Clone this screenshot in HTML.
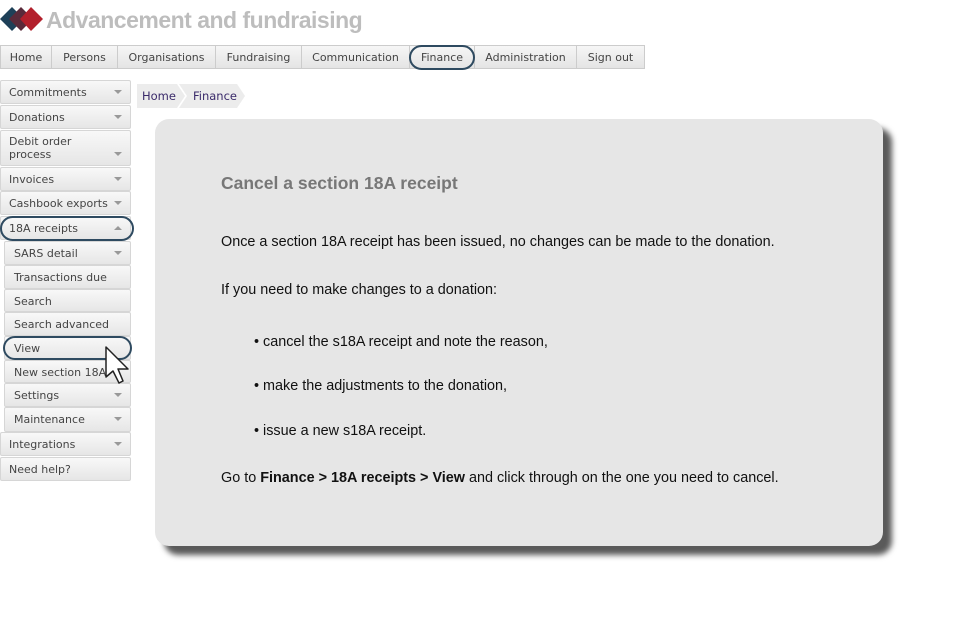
<!DOCTYPE html>
<html><head><meta charset="utf-8"><style>
*{box-sizing:border-box;margin:0;padding:0}
body{width:970px;height:640px;background:#fff;position:relative;overflow:hidden;font-family:"DejaVu Sans","Liberation Sans",sans-serif;}
.title{position:absolute;left:46px;top:7px;font:bold 23px "Liberation Sans",sans-serif;color:#bdbdbd;letter-spacing:-0.5px}
.nav{position:absolute;left:0;top:45px;height:24px;display:flex}
.nav div{height:24px;border:1px solid #ccc;border-left:none;background:linear-gradient(#f6f6f6,#e4e4e4);font-size:11px;color:#444;line-height:23px;text-align:center}
.nav div:first-child{border-left:1px solid #ccc}
.it{position:absolute;left:0;width:131px;background:linear-gradient(#f8f8f8,#e6e6e6);border:1px solid #d6d6d6;border-radius:2px;font-size:11px;color:#444;padding-left:8px;line-height:23px}
.it.sub{left:4px;width:127px;padding-left:9px}
.ar{position:absolute;right:8px;top:9px;width:0;height:0;border-left:4px solid transparent;border-right:4px solid transparent;border-top:4px solid #999}
.up{border-top:none;border-bottom:4px solid #999}
.oval{position:absolute;border:2px solid #2e4a60;border-radius:14px}
.crumb{position:absolute;top:84px;height:24px;font-size:11.5px;color:#3a2a6a;line-height:24px}
.box{position:absolute;left:155px;top:119px;width:728px;height:427px;background:#e6e6e6;border-radius:14px;box-shadow:9px 9px 6px #5a5a5a;font-family:"Liberation Sans",sans-serif;color:#111;font-size:14.4px}
.box p{position:absolute;left:66px;white-space:nowrap}
</style></head><body>
<svg style="position:absolute;left:0;top:6px" width="46" height="28">
<polygon points="0,13 12,1 24,13 12,25" fill="#1e4058"/>
<polygon points="9,13 21,1 33,13 21,25" fill="#5a2a3a"/>
<polygon points="20,13 31,1 43,13 31,25" fill="#b3202c"/>
</svg>
<div class="title">Advancement and fundraising</div>
<div class="nav">
<div style="width:52px">Home</div><div style="width:66px">Persons</div><div style="width:98px">Organisations</div><div style="width:86px">Fundraising</div><div style="width:108px">Communication</div><div style="width:65px">Finance</div><div style="width:102px">Administration</div><div style="width:68px">Sign out</div>
</div>
<div class="oval" style="left:409px;top:45px;width:66px;height:25px"></div>
<div class="it" style="top:80px;height:24px">Commitments<span class="ar"></span></div>
<div class="it" style="top:105px;height:24px">Donations<span class="ar"></span></div>
<div class="it" style="top:130px;height:36px;line-height:13px;padding-top:4px">Debit order<br>process<span class="ar" style="top:21px"></span></div>
<div class="it" style="top:167px;height:24px">Invoices<span class="ar"></span></div>
<div class="it" style="top:191px;height:24px">Cashbook exports<span class="ar"></span></div>
<div class="it" style="top:216px;height:24px">18A receipts<span class="ar up"></span></div>
<div class="it sub" style="top:241px;height:24px">SARS detail<span class="ar"></span></div>
<div class="it sub" style="top:265px;height:24px">Transactions due</div>
<div class="it sub" style="top:289px;height:23px">Search</div>
<div class="it sub" style="top:312px;height:24px">Search advanced</div>
<div class="it sub" style="top:336px;height:24px">View</div>
<div class="it sub" style="top:360px;height:23px">New section 18A</div>
<div class="it sub" style="top:383px;height:24px">Settings<span class="ar"></span></div>
<div class="it sub" style="top:407px;height:25px">Maintenance<span class="ar"></span></div>
<div class="it" style="top:432px;height:24px">Integrations<span class="ar"></span></div>
<div class="it" style="top:457px;height:24px">Need help?</div>
<div class="oval" style="left:0;top:216px;width:134px;height:25px"></div>
<div class="oval" style="left:3px;top:336px;width:129px;height:24px"></div>
<svg style="position:absolute;left:104px;top:345px" width="28" height="42"><polygon points="2,2 2,32 9,26 15,38 19,36 14,24 24,24" fill="#fff" stroke="#222" stroke-width="1.5" stroke-linejoin="round"/></svg>
<svg style="position:absolute;left:137px;top:84px" width="112" height="24">
<polygon points="0,0 40,0 48,12 40,24 0,24" fill="#ececec"/>
<polygon points="42,0 100,0 108,12 100,24 42,24 50,12" fill="#ececec"/>
</svg>
<div class="crumb" style="left:142px">Home</div>
<div class="crumb" style="left:193px">Finance</div>
<div class="box">
<p style="top:54px;font-weight:bold;font-size:17.5px;color:#777">Cancel a section 18A receipt</p>
<p style="top:115px">Once a section 18A receipt has been issued, no changes can be made to the donation.</p>
<p style="top:163px">If you need to make changes to a donation:</p>
<p style="top:215px;left:99px">• cancel the s18A receipt and note the reason,</p>
<p style="top:259px;left:99px">• make the adjustments to the donation,</p>
<p style="top:304px;left:99px">• issue a new s18A receipt.</p>
<p style="top:351px">Go to <b>Finance &gt; 18A receipts &gt; View</b> and click through on the one you need to cancel.</p>
</div>
</body></html>
